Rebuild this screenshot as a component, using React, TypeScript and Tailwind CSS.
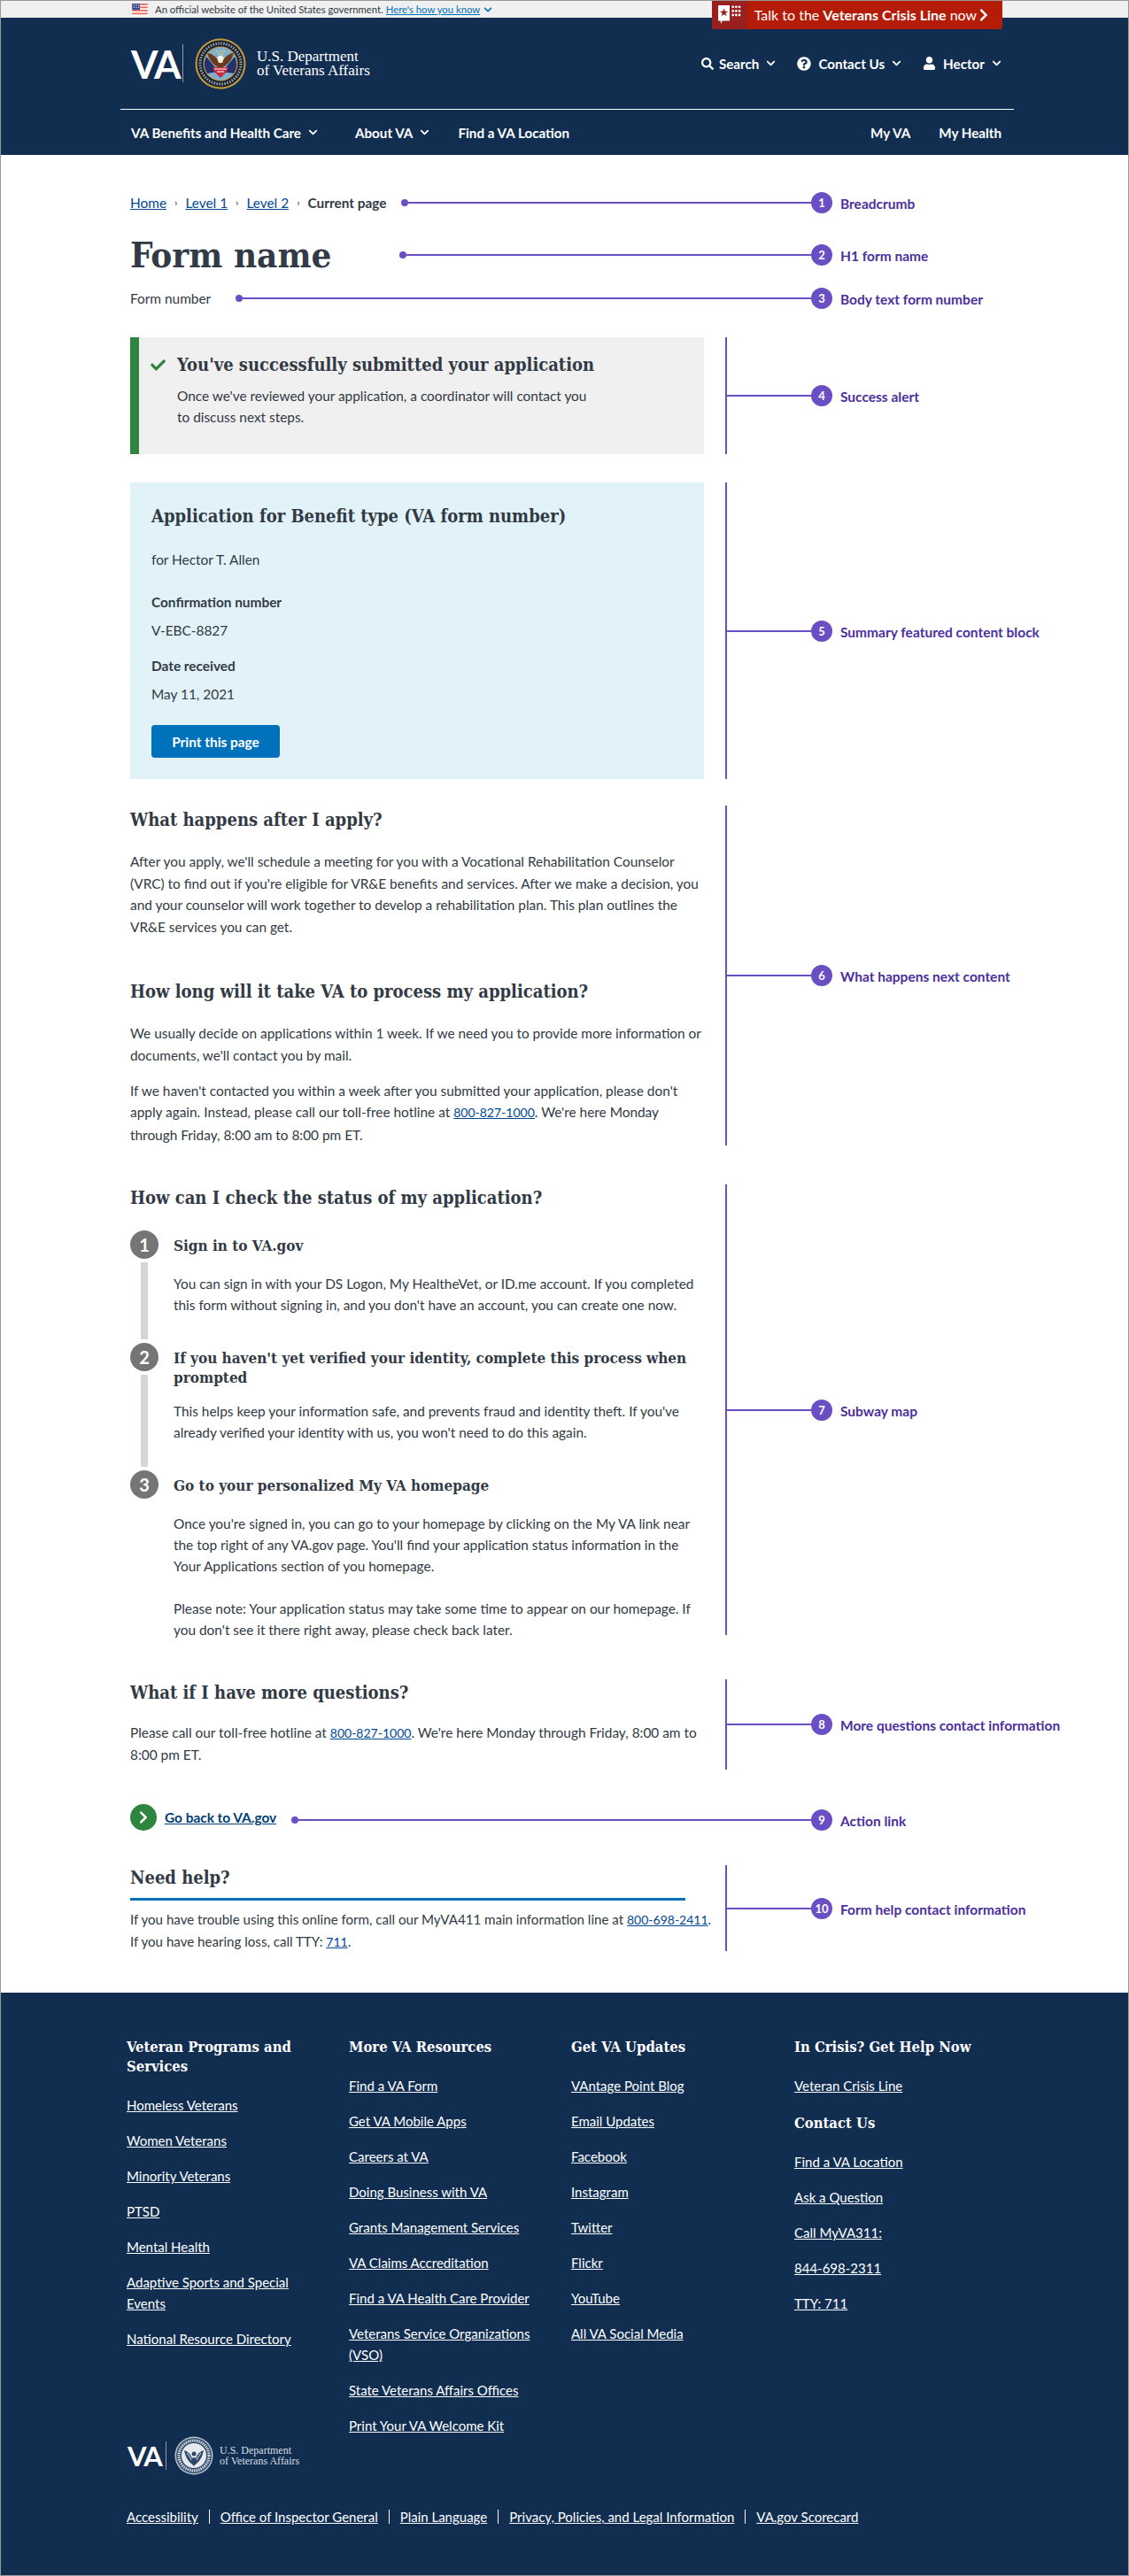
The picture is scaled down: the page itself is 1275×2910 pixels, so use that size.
import { ReactNode } from "react";
import { FaCheck, FaChevronDown, FaChevronRight, FaQuestionCircle, FaSearch, FaUser } from "react-icons/fa";

const slab = "[font-family:'DejaVu_Serif_Condensed','DejaVu_Serif',serif] font-bold";

function Badge({ n }: { n: number }) {
  return (
    <span className="flex h-6 w-6 shrink-0 items-center justify-center rounded-full bg-[#6a4ec3] text-[13px] font-bold text-white">
      {n}
    </span>
  );
}

function Note({ n, label }: { n: number; label: string }) {
  return (
    <>
      <Badge n={n} />
      <span className="ml-[9px] translate-y-px whitespace-nowrap text-[15.500px] font-bold text-[#4c2f9c]">{label}</span>
    </>
  );
}

// row with text on the left and a pointer running over to the numbered note
function PointerRow({ n, label, shift, children }: { n: number; label: string; shift?: boolean; children: ReactNode }) {
  const drop = shift ? "translate-y-[3px]" : "";
  return (
    <div className="flex items-center">
      <div className="flex w-[769px] items-center">
        {children}
        <span className={`h-2 w-2 shrink-0 rounded-full bg-[#6a4ec3] ${drop}`} />
        <span className={`h-[2px] flex-1 bg-[#6a4ec3] ${drop}`} />
      </div>
      <div className={`flex items-center ${drop}`}>
        <Note n={n} label={label} />
      </div>
    </div>
  );
}

function Bracketed({ n, label, children }: { n: number; label: string; children: ReactNode }) {
  return (
    <div className="flex">
      <div className="w-[648px] shrink-0">{children}</div>
      <div className="ml-6 flex items-center border-l-2 border-[#6a4ec3]">
        <span className="h-[2px] w-[95px] bg-[#6a4ec3]" />
        <Note n={n} label={label} />
      </div>
    </div>
  );
}

function Seal({ mono }: { mono?: boolean }) {
  if (mono) {
    return (
      <svg viewBox="0 0 44 44" className="h-11 w-11 shrink-0">
        <circle cx="22" cy="22" r="21.500" fill="#b9c3cf" />
        <circle cx="22" cy="22" r="20" fill="#35506f" />
        <circle cx="22" cy="22" r="17" fill="none" stroke="#d5dbe2" strokeWidth="3" strokeDasharray="1.500 1" />
        <circle cx="22" cy="22" r="14" fill="#e6eaee" />
        <path d="M22 34c-2-3-9-6-11-18 4 1 7 4 9 9l2-1 2 1c2-5 5-8 9-9-2 12-9 15-11 18z" fill="#2c4767" />
        <path d="M14 19c2 3 4 5 5 8M30 19c-2 3-4 5-5 8" stroke="#e6eaee" strokeWidth="1" fill="none" />
        <circle cx="22" cy="20" r="2.500" fill="#2c4767" />
      </svg>
    );
  }
  return (
    <svg viewBox="0 0 58 58" className="h-[58px] w-[58px] shrink-0">
      <circle cx="29" cy="29" r="28.500" fill="#c49a3a" />
      <circle cx="29" cy="29" r="26.500" fill="#16233f" />
      <circle cx="29" cy="29" r="23" fill="none" stroke="#a9a690" strokeWidth="3" strokeDasharray="1.500 1.500" />
      <circle cx="29" cy="29" r="19.500" fill="#c49a3a" />
      <circle cx="29" cy="29" r="18.500" fill="#7fb1cf" />
      <path d="M13 21 27 38 14 40A19 19 0 0 1 13 21z" fill="#26306b" />
      <path d="M45 21 31 38 44 40A19 19 0 0 0 45 21z" fill="#26306b" />
      <path d="M29 34C22 32 16 25 14 17c5 0 10 4 13 9h4c3-5 8-9 13-9-2 8-8 15-15 17z" fill="#6b3a1c" />
      <path d="M26 25a3.500 3.500 0 1 1 6 0l-1 3h-4z" fill="#f4f1e6" />
      <path d="M20 33h18l-2 5-7 7-7-7z" fill="#c8293a" />
      <path d="M22 35h14M25 38h8" stroke="#fff" strokeWidth="1" />
      <g fill="#e8c75a">
        <circle cx="25" cy="15" r="1" />
        <circle cx="29" cy="15" r="1" />
        <circle cx="33" cy="15" r="1" />
        <circle cx="27" cy="18" r="1" />
        <circle cx="31" cy="18" r="1" />
      </g>
    </svg>
  );
}

function Flag() {
  return (
    <svg viewBox="0 0 20 16" className="h-[14px] w-5 shrink-0">
      <rect width="20" height="16" fill="#fff" />
      <path d="M0 1h20M0 5h20M0 9h20M0 13h20" stroke="#e2685e" strokeWidth="2" />
      <rect width="10" height="8" fill="#3d4a96" />
      <path d="M2 2h1M5 2h1M8 2h1M2 5h1M5 5h1M8 5h1" stroke="#fff" strokeWidth="1.500" />
    </svg>
  );
}

function CrisisIcon() {
  return (
    <svg viewBox="0 0 30 26" className="h-[24px] w-[28px]">
      <path d="M1 1h14v19H6l-2 4v-4H1z" fill="#fff" />
      <path d="m8 5 1.300 3.500H13l-3 2.200 1.200 3.600L8 12.100l-3.200 2.200L6 10.700 3 8.500h3.700z" fill="#9a1c1c" />
      <g fill="#fff">
        <circle cx="19" cy="3" r="1.500" /><circle cx="23" cy="3" r="1.500" /><circle cx="27" cy="3" r="1.500" />
        <circle cx="19" cy="8" r="1.500" /><circle cx="23" cy="8" r="1.500" /><circle cx="27" cy="8" r="1.500" />
        <circle cx="19" cy="13" r="1.500" /><circle cx="23" cy="13" r="1.500" /><circle cx="27" cy="13" r="1.500" />
      </g>
    </svg>
  );
}

function Step({ n, title, last, gap, children }: { n: number; title: ReactNode; last?: boolean; gap: string; children: ReactNode }) {
  return (
    <div className="flex">
      <div className="mr-[17px] flex w-8 shrink-0 flex-col items-center">
        <span className="flex h-8 w-8 items-center justify-center rounded-full bg-[#757575] text-[20px] font-bold text-white">{n}</span>
        {!last && <span className="my-1 w-2 flex-1 bg-[#d6d6d6]" />}
      </div>
      <div className="flex-1 pb-[31px] pt-[6px]">
        <h3 className={`${slab} text-[17px] leading-[22px] text-[#323a45]`}>{title}</h3>
        <div className={gap}>{children}</div>
      </div>
    </div>
  );
}

function FooterLinks({ links }: { links: string[] }) {
  return (
    <ul className="flex flex-col gap-4">
      {links.map((l) => (
        <li key={l}>
          <a className="underline">{l}</a>
        </li>
      ))}
    </ul>
  );
}

function FooterHead({ children }: { children: ReactNode }) {
  return <h4 className={`${slab} mb-5 text-[16.500px] leading-[22px] text-white`}>{children}</h4>;
}

const Phone = ({ children }: { children: ReactNode }) => <a className="text-[14px] text-[#004795] underline">{children}</a>;

function App() {
  return (
    <div className="relative min-h-[2910px] w-full border border-[#999] bg-white font-[Lato,sans-serif] text-[15.400px] leading-6 text-[#323a45]">
      {/* banner */}
      <div className="flex h-[19px] items-center bg-[#f0f0f0] pl-[147px] text-[11.300px]">
        <Flag />
        <span className="ml-[7px]">An official website of the United States government.</span>
        <a className="ml-[3px] text-[#0071bb] underline">Here's how you know</a>
        <FaChevronDown className="ml-1 text-[10px] text-[#0071bb]" />
      </div>

      {/* crisis line tab */}
      <a className="absolute left-[803px] top-0 flex h-8 w-[328px] items-center overflow-hidden rounded-b-[3px] bg-[#b51c08] text-white">
        <span className="flex h-full w-10 items-center justify-center bg-[#9a1f1f]">
          <CrisisIcon />
        </span>
        <span className="ml-2 whitespace-nowrap text-[16px]">
          Talk to the <b>Veterans Crisis Line</b> now
        </span>
        <FaChevronRight className="ml-auto mr-[13px] text-[16px]" />
      </a>

      {/* header */}
      <header className="h-[155px] bg-[#112e51] text-white">
        <div className="flex h-[103px] items-center pl-[147px] pr-[143px]">
          <span className="w-[48px] text-[44px] font-bold leading-none tracking-[-2px]">VA</span>
          <span className="ml-[10px] mr-[13px] h-[43px] w-px bg-[#8d9bab]" />
          <Seal />
          <span className="ml-3 text-[17px] leading-4 [font-family:'Liberation_Serif',serif]">
            U.S. Department
            <br />
            of Veterans Affairs
          </span>
          <div className="ml-auto flex items-center text-[15.200px] font-bold">
            <FaSearch className="text-[14px]" />
            <span className="ml-[6px]">Search</span>
            <FaChevronDown className="ml-2 text-[11px]" />
            <FaQuestionCircle className="ml-6 text-[16px]" />
            <span className="ml-[8px]">Contact Us</span>
            <FaChevronDown className="ml-2 text-[11px]" />
            <FaUser className="ml-6 text-[15px]" />
            <span className="ml-2">Hector</span>
            <FaChevronDown className="ml-2 text-[11px]" />
          </div>
        </div>
        <div className="ml-[135px] mr-[129px] h-px bg-white" />
        <nav className="ml-[135px] mr-[143px] flex h-[51px] items-center pl-[12px] text-[15.200px] font-bold">
          <span>VA Benefits and Health Care</span>
          <FaChevronDown className="ml-2 text-[11px]" />
          <span className="ml-[42px]">About VA</span>
          <FaChevronDown className="ml-2 text-[11px]" />
          <span className="ml-8">Find a VA Location</span>
          <span className="ml-auto">My VA</span>
          <span className="ml-8">My Health</span>
        </nav>
      </header>

      <main className="pl-[146px] pt-[42px]">
        <PointerRow n={1} label="Breadcrumb">
          <div className="mr-4 flex items-center whitespace-nowrap">
            <a className="text-[#004795] underline">Home</a>
            <span className="mx-[9px] text-[12px]">›</span>
            <a className="text-[#004795] underline">Level 1</a>
            <span className="mx-[9px] text-[12px]">›</span>
            <a className="text-[#004795] underline">Level 2</a>
            <span className="mx-[9px] text-[12px]">›</span>
            <b>Current page</b>
          </div>
        </PointerRow>

        <div className="mt-[23px]">
          <PointerRow n={2} label="H1 form name">
            <h1 className={`${slab} w-[304px] text-[40px] leading-[48px]`}>Form name</h1>
          </PointerRow>
        </div>

        <div className="mt-[13px]">
          <PointerRow n={3} label="Body text form number">
            <p className="mr-[28px]">Form number</p>
          </PointerRow>
        </div>

        <div className="mt-[32px]">
          <Bracketed n={4} label="Success alert">
            <div className="flex h-[132px] border-l-[10px] border-[#2e8540] bg-[#f0f0f0] pl-3 pr-10 pt-[18px]">
              <FaCheck className="mt-[5px] h-[17px] w-[19px] shrink-0 text-[#2e8540]" />
              <div className="ml-3">
                <h3 className={`${slab} text-[20px] leading-[26px]`}>You've successfully submitted your application</h3>
                <p className="mt-[10px]">
                  Once we've reviewed your application, a coordinator will contact you
                  <br />
                  to discuss next steps.
                </p>
              </div>
            </div>
          </Bracketed>
        </div>

        <div className="mt-8">
          <Bracketed n={5} label="Summary featured content block">
            <div className="h-[335px] bg-[#e1f3f8] px-6 pt-[25px]">
              <h3 className={`${slab} text-[20px] leading-[26px]`}>Application for Benefit type (VA form number)</h3>
              <p className="mt-6">for Hector T. Allen</p>
              <p className="mt-6 font-bold">Confirmation number</p>
              <p className="mt-2">V-EBC-8827</p>
              <p className="mt-4 font-bold">Date received</p>
              <p className="mt-2">May 11, 2021</p>
              <button className="mt-[23px] h-[37px] w-[145px] rounded bg-[#0071bb] font-bold text-white">Print this page</button>
            </div>
          </Bracketed>
        </div>

        <div className="mt-[30px]">
          <Bracketed n={6} label="What happens next content">
            <div className="h-[384px] pt-[2px]">
              <h2 className={`${slab} text-[20px] leading-7`}>What happens after I apply?</h2>
              <p className="mt-[21px] leading-[24.600px]">
                After you apply, we'll schedule a meeting for you with a Vocational Rehabilitation Counselor (VRC) to find out if you're eligible for VR&E benefits and services. After we make a decision, you and your counselor will work together to develop a rehabilitation plan. This plan outlines the VR&E services you can get.
              </p>
              <h2 className={`${slab} mt-[47px] text-[20px] leading-7`}>How long will it take VA to process my application?</h2>
              <p className="mt-[21px] leading-[24.600px]">
                We usually decide on applications within 1 week. If we need you to provide more information or documents, we'll contact you by mail.
              </p>
              <p className="mt-[15px] leading-[24.600px]">
                If we haven't contacted you within a week after you submitted your application, please don't apply again. Instead, please call our toll-free hotline at <Phone>800-827-1000</Phone>. We're here Monday through Friday, 8:00 am to 8:00 pm ET.
              </p>
            </div>
          </Bracketed>
        </div>

        <div className="mt-[44px]">
          <Bracketed n={7} label="Subway map">
            <div className="h-[509px] pt-px">
              <h2 className={`${slab} mb-[23px] text-[20px] leading-7`}>How can I check the status of my application?</h2>
              <Step n={1} title="Sign in to VA.gov" gap="mt-5">
                <p>You can sign in with your DS Logon, My HealtheVet, or ID.me account. If you completed this form without signing in, and you don't have an account, you can create one now.</p>
              </Step>
              <Step n={2} title="If you haven't yet verified your identity, complete this process when prompted" gap="mt-[15px]">
                <p>This helps keep your information safe, and prevents fraud and identity theft. If you've already verified your identity with us, you won't need to do this again.</p>
              </Step>
              <Step n={3} title="Go to your personalized My VA homepage" gap="mt-5" last>
                <p>
                  Once you're signed in, you can go to your homepage by clicking on the My VA link near
                  <br />
                  the top right of any VA.gov page. You'll find your application status information in the
                  <br />
                  Your Applications section of you homepage.
                </p>
                <p className="mt-6">
                  Please note: Your application status may take some time to appear on our homepage. If
                  <br />
                  you don't see it there right away, please check back later.
                </p>
              </Step>
            </div>
          </Bracketed>
        </div>

        <div className="mt-[50px]">
          <Bracketed n={8} label="More questions contact information">
            <div className="h-[102px]">
              <h2 className={`${slab} pt-px text-[20px] leading-7`}>What if I have more questions?</h2>
              <p className="mt-[19px]">
                Please call our toll-free hotline at <Phone>800-827-1000</Phone>. We're here Monday through Friday, 8:00 am to 8:00 pm ET.
              </p>
            </div>
          </Bracketed>
        </div>

        <div className="mt-[39px]">
          <PointerRow n={9} label="Action link" shift>
            <span className="flex h-[30px] w-[30px] shrink-0 items-center justify-center rounded-full bg-[#2e8540] text-white">
              <FaChevronRight className="text-[16px]" />
            </span>
            <a className="ml-[9px] mr-[17px] font-bold text-[#003e73] underline">Go back to VA.gov</a>
          </PointerRow>
        </div>

        <div className="mt-[39px]">
          <Bracketed n={10} label="Form help contact information">
            <div className="h-[97px]">
              <h3 className={`${slab} text-[20px] leading-[28px]`}>Need help?</h3>
              <div className="mr-[21px] mt-[9px] h-[3px] bg-[#0071bb]" />
              <p className="mt-[9px] whitespace-nowrap text-[15.100px]">
                If you have trouble using this online form, call our MyVA411 main information line at <Phone>800-698-2411</Phone>.
                <br />
                If you have hearing loss, call TTY: <Phone>711</Phone>.
              </p>
            </div>
          </Bracketed>
        </div>
      </main>

      {/* footer */}
      <footer className="mt-[47px] h-[658px] bg-[#112e51] pl-[142px] pt-[51px] text-[15px] text-white">
        <div className="grid grid-cols-[251px_251px_252px_1fr]">
          <div className="w-[215px]">
            <FooterHead>Veteran Programs and Services</FooterHead>
            <FooterLinks links={["Homeless Veterans", "Women Veterans", "Minority Veterans", "PTSD", "Mental Health", "Adaptive Sports and Special Events", "National Resource Directory"]} />
          </div>
          <div className="w-[225px]">
            <FooterHead>More VA Resources</FooterHead>
            <FooterLinks links={["Find a VA Form", "Get VA Mobile Apps", "Careers at VA", "Doing Business with VA", "Grants Management Services", "VA Claims Accreditation", "Find a VA Health Care Provider", "Veterans Service Organizations (VSO)", "State Veterans Affairs Offices", "Print Your VA Welcome Kit"]} />
          </div>
          <div>
            <FooterHead>Get VA Updates</FooterHead>
            <FooterLinks links={["VAntage Point Blog", "Email Updates", "Facebook", "Instagram", "Twitter", "Flickr", "YouTube", "All VA Social Media"]} />
          </div>
          <div>
            <FooterHead>In Crisis? Get Help Now</FooterHead>
            <FooterLinks links={["Veteran Crisis Line"]} />
            <div className="mt-5">
              <FooterHead>Contact Us</FooterHead>
            </div>
            <FooterLinks links={["Find a VA Location", "Ask a Question", "Call MyVA311:", "844-698-2311", "TTY: 711"]} />
          </div>
        </div>

        <div className="flex items-center pl-px">
          <span className="w-[36px] text-[31px] font-bold leading-none tracking-[-1.500px]">VA</span>
          <span className="ml-[7px] mr-[9px] h-[32px] w-px bg-[#8d9bab]" />
          <Seal mono />
          <span className="ml-[7px] text-[12px] leading-3 text-[#d8dde3] [font-family:'Liberation_Serif',serif]">
            U.S. Department
            <br />
            of Veterans Affairs
          </span>
        </div>

        <div className="mt-[35px] flex items-center">
          {["Accessibility", "Office of Inspector General", "Plain Language", "Privacy, Policies, and Legal Information", "VA.gov Scorecard"].map((l, i) => (
            <span key={l} className="flex items-center">
              {i > 0 && <span className="mx-3 h-[16px] w-px bg-white" />}
              <a className="underline">{l}</a>
            </span>
          ))}
        </div>
      </footer>
    </div>
  );
}

export default App;
